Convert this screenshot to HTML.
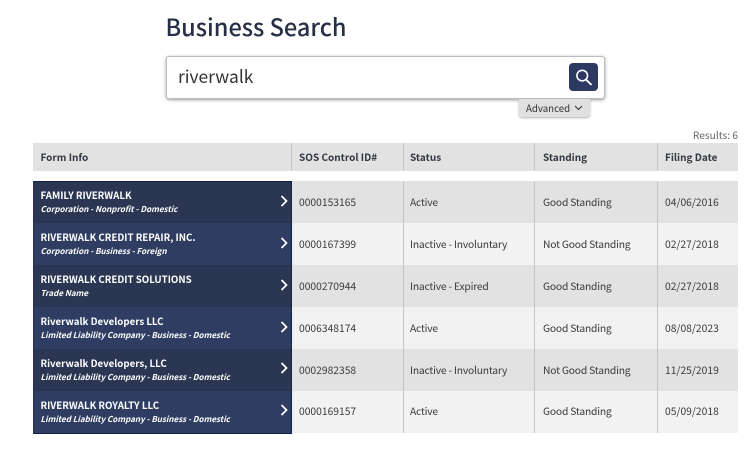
<!DOCTYPE html>
<html><head><meta charset="utf-8">
<style>
html,body{margin:0;padding:0;width:750px;height:457px;overflow:hidden;background:#fff}
body{position:relative;font-family:"Noto Sans CJK JP","Liberation Sans",sans-serif;color:#333}
.a{position:absolute;white-space:nowrap}
.t{font-size:10.3px;line-height:14px;color:#3a3a3a}
.l{letter-spacing:-.2px}
.h{font-size:10px;line-height:14px;font-weight:bold;color:#333740;top:150px}
.n{left:40.5px;font-size:9.7px;line-height:14px;font-weight:bold;color:#fff}
.s{left:40.5px;font-size:8.05px;line-height:11px;font-weight:bold;font-style:italic;color:#fff}
.v{position:absolute;width:1px;background:#c4c4c4}
.r{position:absolute;left:33px;width:705px;height:42px}
.f{position:absolute;left:33px;width:258px;height:42px}
svg{position:absolute}
</style></head><body>
<div class="a" style="left:165.5px;top:10px;font-size:23.5px;line-height:32px;color:#262f45;font-weight:500">Business Search</div>

<div class="a" style="left:166px;top:56px;width:437px;height:41px;border:1px solid #bdbdbd;border-radius:3px;box-shadow:0 1px 3px rgba(0,0,0,.4);background:#fff"></div>
<div class="a" style="left:178px;top:66px;font-size:17.4px;line-height:22px;color:#333">riverwalk</div>
<div class="a" style="left:569px;top:63px;width:29px;height:28px;border-radius:4px;background:#2c3a62"></div>
<svg style="left:569px;top:63px" width="29" height="28" viewBox="0 0 29 28"><circle cx="13.2" cy="12.6" r="5.3" fill="none" stroke="#fff" stroke-width="1.6"/><path d="M17 16.6 L22 21.4" stroke="#fff" stroke-width="1.9" stroke-linecap="round"/></svg>

<div class="a" style="left:519px;top:99px;width:71px;height:18px;background:#e0e0e0;border-radius:0 0 3px 3px;box-shadow:0 1px 2px rgba(0,0,0,.3)"></div>
<div class="a" style="left:526px;top:101px;font-size:9.7px;line-height:14px;color:#333">Advanced</div>
<svg style="left:574px;top:105px" width="9" height="6" viewBox="0 0 9 6"><path d="M1 1 L4.5 4.5 L8 1" fill="none" stroke="#333" stroke-width="1.1"/></svg>

<div class="a" style="right:12px;top:128px;font-size:10.2px;line-height:14px;color:#666">Results: 6</div>

<div class="a" style="left:33px;top:143px;width:705px;height:28px;background:#e2e2e2"></div>
<div class="a h" style="left:40.5px">Form Info</div>
<div class="a h" style="left:299px">SOS Control ID#</div>
<div class="a h" style="left:410px">Status</div>
<div class="a h" style="left:543px">Standing</div>
<div class="a h" style="left:665px">Filing Date</div>

<div class="r" style="top:181px;background:#e2e2e2"></div>
<div class="r" style="top:223px;background:#f2f2f2"></div>
<div class="r" style="top:265px;background:#e2e2e2"></div>
<div class="r" style="top:307px;background:#f2f2f2"></div>
<div class="r" style="top:349px;background:#e2e2e2"></div>
<div class="r" style="top:391px;background:#f2f2f2"></div>

<div class="v" style="left:291px;top:143px;height:28px"></div>
<div class="v" style="left:403px;top:143px;height:28px"></div>
<div class="v" style="left:534px;top:143px;height:28px"></div>
<div class="v" style="left:657px;top:143px;height:28px"></div>
<div class="v" style="left:403px;top:181px;height:252px"></div>
<div class="v" style="left:534px;top:181px;height:252px"></div>
<div class="v" style="left:657px;top:181px;height:252px"></div>

<div class="f" style="top:181px;background:#2b3653"></div>
<div class="f" style="top:223px;background:#303d63"></div>
<div class="f" style="top:265px;background:#2b3653"></div>
<div class="f" style="top:307px;background:#303d63"></div>
<div class="f" style="top:349px;background:#2b3653"></div>
<div class="f" style="top:391px;background:#303d63"></div>
<div class="a" style="left:33px;top:181px;width:257px;height:251px;border:1px solid #141f50;border-left-color:#25305a"></div>

<div class="a n" style="top:188px">FAMILY RIVERWALK</div>
<div class="a s" style="top:204px">Corporation - Nonprofit - Domestic</div>
<div class="a n" style="top:230px">RIVERWALK CREDIT REPAIR, INC.</div>
<div class="a s" style="top:246px">Corporation - Business - Foreign</div>
<div class="a n" style="top:272px">RIVERWALK CREDIT SOLUTIONS</div>
<div class="a s" style="top:288px">Trade Name</div>
<div class="a n" style="top:314px">Riverwalk Developers LLC</div>
<div class="a s" style="top:330px">Limited Liability Company - Business - Domestic</div>
<div class="a n" style="top:356px">Riverwalk Developers, LLC</div>
<div class="a s" style="top:372px">Limited Liability Company - Business - Domestic</div>
<div class="a n" style="top:398px">RIVERWALK ROYALTY LLC</div>
<div class="a s" style="top:414px">Limited Liability Company - Business - Domestic</div>

<svg style="left:280px;top:195px" width="9" height="12" viewBox="0 0 9 12"><path d="M1.5 1 L6.5 6 L1.5 11" fill="none" stroke="#fff" stroke-width="1.7"/></svg>
<svg style="left:280px;top:237px" width="9" height="12" viewBox="0 0 9 12"><path d="M1.5 1 L6.5 6 L1.5 11" fill="none" stroke="#fff" stroke-width="1.7"/></svg>
<svg style="left:280px;top:279px" width="9" height="12" viewBox="0 0 9 12"><path d="M1.5 1 L6.5 6 L1.5 11" fill="none" stroke="#fff" stroke-width="1.7"/></svg>
<svg style="left:280px;top:321px" width="9" height="12" viewBox="0 0 9 12"><path d="M1.5 1 L6.5 6 L1.5 11" fill="none" stroke="#fff" stroke-width="1.7"/></svg>
<svg style="left:280px;top:362px" width="9" height="12" viewBox="0 0 9 12"><path d="M1.5 1 L6.5 6 L1.5 11" fill="none" stroke="#fff" stroke-width="1.7"/></svg>
<svg style="left:280px;top:404px" width="9" height="12" viewBox="0 0 9 12"><path d="M1.5 1 L6.5 6 L1.5 11" fill="none" stroke="#fff" stroke-width="1.7"/></svg>

<div class="a t" style="left:299px;top:195px">0000153165</div><div class="a t l" style="left:410px;top:195px">Active</div><div class="a t l" style="left:543px;top:195px">Good Standing</div><div class="a t" style="left:665px;top:195px">04/06/2016</div>
<div class="a t" style="left:299px;top:237px">0000167399</div><div class="a t l" style="left:410px;top:237px">Inactive - Involuntary</div><div class="a t l" style="left:543px;top:237px">Not Good Standing</div><div class="a t" style="left:665px;top:237px">02/27/2018</div>
<div class="a t" style="left:299px;top:279px">0000270944</div><div class="a t l" style="left:410px;top:279px">Inactive - Expired</div><div class="a t l" style="left:543px;top:279px">Good Standing</div><div class="a t" style="left:665px;top:279px">02/27/2018</div>
<div class="a t" style="left:299px;top:321px">0006348174</div><div class="a t l" style="left:410px;top:321px">Active</div><div class="a t l" style="left:543px;top:321px">Good Standing</div><div class="a t" style="left:665px;top:321px">08/08/2023</div>
<div class="a t" style="left:299px;top:363px">0002982358</div><div class="a t l" style="left:410px;top:363px">Inactive - Involuntary</div><div class="a t l" style="left:543px;top:363px">Not Good Standing</div><div class="a t" style="left:665px;top:363px">11/25/2019</div>
<div class="a t" style="left:299px;top:404px">0000169157</div><div class="a t l" style="left:410px;top:404px">Active</div><div class="a t l" style="left:543px;top:404px">Good Standing</div><div class="a t" style="left:665px;top:404px">05/09/2018</div>
</body></html>
